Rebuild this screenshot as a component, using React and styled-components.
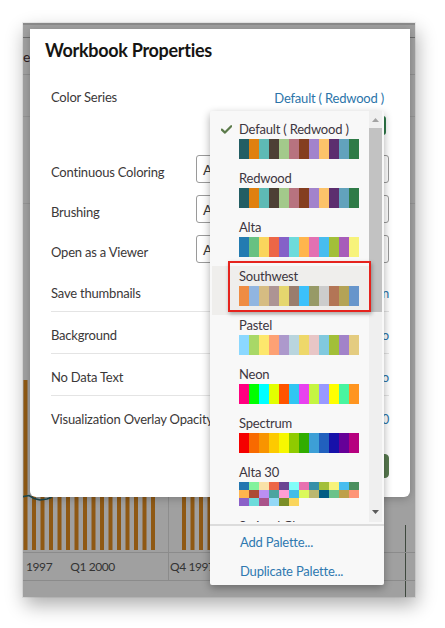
import React from 'react';
import styled, { createGlobalStyle } from 'styled-components';

const GlobalStyle = createGlobalStyle`
  html, body { margin: 0; padding: 0; background: #ffffff; }
  body { font-family: Lato, "Noto Sans", sans-serif; }
`;

const PALETTES = [
  { name: 'Default ( Redwood )', checked: true, rows: [['#235e64','#e0800f','#5ebab5','#4d4035','#a3c98b','#b7737f','#843e1f','#a283cc','#fcc36a','#5c2e6e','#62a2bc','#2e7b47']] },
  { name: 'Redwood', rows: [['#235e64','#e0800f','#5ebab5','#4d4035','#a3c98b','#b7737f','#843e1f','#a283cc','#fcc36a','#5c2e6e','#62a2bc','#2e7b47']] },
  { name: 'Alta', rows: [['#237bb1','#68c182','#fad55c','#ed6647','#8561c8','#6ddbdb','#ffb54d','#e371b2','#47bdef','#a2bf39','#a75dba','#f7f37b']] },
  { name: 'Southwest', active: true, rows: [['#ef8c43','#91b5e0','#d6bc82','#ad9494','#e5d66e','#9a7d6d','#3bc1fb','#979a67','#cccccc','#b37556','#b4a356','#6795cb']] },
  { name: 'Pastel', rows: [['#8bd8ff','#a8d867','#fde76c','#fda174','#ad99cc','#b9d5de','#eed86a','#e8c6c6','#81c9de','#a2bf39','#a283c9','#e4cc80']] },
  { name: 'Neon', rows: [['#ff0080','#00ff00','#00ffff','#e2ff00','#ff5400','#31c6f2','#e842ef','#c5f542','#9999ff','#ffff00','#48f5a0','#ff9520']] },
  { name: 'Spectrum', rows: [['#f50000','#f86a00','#f89400','#fdca00','#f7f700','#8fcb00','#31ad00','#3d9fd6','#2160be','#1611a9','#660098','#b6007f']] },
  { name: 'Alta 30', small: true, rows: [
    ['#2376b0','#82f29d','#f9e2a8','#ed6647','#6a4592','#82fdf9','#e771b0','#3690a8','#a2bf39','#f7f37b','#47bdef','#4b8f5e'],
    ['#ffb54d','#ac4b34','#bb8ff2','#4ca49f','#ff9ed2','#44bde9','#dbf95a','#bbb770','#015c84','#6bc28a','#bea04a','#fe9476'],
    ['#8b61c8','#6ddbdb','#aa538a','#93d8f6','#7a8e26','#fad55c'],
  ] },
  { name: 'Stained Glass', rows: [['#c0392b','#e67e22','#f1c40f','#27ae60','#2980b9','#8e44ad','#16a085','#d35400','#2c3e50','#7f8c8d','#e74c3c','#3498db']] },
];

const GROUP1 = [10, 40, 30, 55, 20, 60, 45, 35, 70, 50, 25, 65, 40, 55, 30, 60];
const GROUP2 = [30, 50, 20, 45, 60, 35, 50, 40, 25, 55, 45];

const textBase = `
  font-size: 13px;
  letter-spacing: -0.2px;
  line-height: 20px;
  white-space: nowrap;
`;

/* ---------- backdrop (dimmed app behind the dialog) ---------- */
const Page = styled.div`
  width: 445px;
  height: 628px;
  padding: 23px 0 0 23px;
  box-sizing: border-box;
  overflow: hidden;
`;

const Frame = styled.div`
  position: relative;
  width: 392px;
  height: 574px;
  background: #a0a0a0;
  box-shadow: 0 0 0 1px rgba(0, 0, 0, 0.06), 2px 8px 18px rgba(0, 0, 0, 0.32);
  display: flex;
  flex-direction: column;
  overflow: hidden;
`;

const TopStrip = styled.div`
  height: 12px;
  border-top: 2px solid #8a8a8a;
  border-bottom: 1px solid #6c6c6c;
`;

const HeadRow = styled.div`
  height: 36px;
  display: flex;
  align-items: center;
  border-bottom: 1px solid #8e8e8e;
`;

const HeadText = styled.span`
  font-size: 14px;
  color: #2e1c1e;
`;

const BandRow = styled.div`
  height: ${(p) => p.$h}px;
  border-bottom: 1px solid #939393;
`;

const Spacer = styled.div`
  flex: 1;
`;

const ChartSvg = styled.svg`
  display: block;
  flex: none;
`;

const edgeLine = `linear-gradient(to right, transparent 382px, #3e493e 382px, #3e493e 383px, transparent 383px)`;

const AxisRow = styled.div`
  height: 27px;
  display: flex;
  border-top: 1px solid #8b8b8b;
  border-bottom: 1px solid #8b8b8b;
  background: ${edgeLine};
`;

const AxisCell = styled.div`
  width: ${(p) => (p.$w ? `${p.$w}px` : 'auto')};
  flex: ${(p) => (p.$w ? 'none' : '1')};
  display: flex;
  align-items: center;
  gap: 18px;
  padding-left: ${(p) => p.$pl}px;
  border-right: ${(p) => (p.$w ? '1px solid #8b8b8b' : 'none')};
  box-sizing: border-box;
`;

const AxisLabel = styled.span`
  font-size: 12px;
  letter-spacing: -0.4px;
  color: #343434;
  white-space: nowrap;
`;

const BottomBand = styled.div`
  height: 16px;
  background: ${edgeLine};
`;

/* ---------- dialog ---------- */
const Dialog = styled.div`
  position: absolute;
  left: 7px;
  top: 6px;
  width: 380px;
  height: 468px;
  background: #ffffff;
  border-radius: 0 0 6px 6px;
  box-shadow: 0 2px 8px rgba(0, 0, 0, 0.22);
  display: flex;
  flex-direction: column;
`;

const Header = styled.div`
  height: 50px;
  box-sizing: border-box;
  padding: 9px 0 0 15px;
`;

const Title = styled.h1`
  margin: 0;
  font-size: 18px;
  letter-spacing: -0.3px;
  line-height: 24px;
  font-weight: 700;
  color: #161513;
`;

const Body = styled.div`
  flex: 1;
  display: flex;
  flex-direction: column;
  padding: 0 21px;
`;

const Row = styled.div`
  height: ${(p) => p.$h}px;
  display: grid;
  grid-template-columns: 145px 1fr;
  align-items: center;
  border-bottom: ${(p) => (p.$divider ? '1px solid #e4e4e4' : 'none')};
  flex: none;
`;

const Label = styled.span`
  ${textBase}
  color: #3b3838;
  padding-top: ${(p) => (p.$low ? 5 : 0)}px;
`;

const Link = styled.a`
  ${textBase}
  justify-self: end;
  color: #2b74a9;
  text-decoration: none;
  padding: ${(p) => (p.$pr ? '2px 5px 0 0' : '5px 0 0 0')};
`;

const ChipRow = styled.div`
  height: 34px;
  display: flex;
  justify-content: flex-end;
  align-items: flex-start;
  flex: none;
`;

const GreenChip = styled.div`
  width: 44px;
  height: 19px;
  margin: 1px 3px 0 0;
  border-radius: 3px;
  background: #2f7b4a;
`;

const Select = styled.div`
  ${textBase}
  height: 28px;
  box-sizing: border-box;
  border: 1px solid #9a9a9a;
  border-radius: 3px;
  display: flex;
  align-items: center;
  justify-content: space-between;
  padding: 2px 8px 0 6px;
  font-size: 14px;
  color: #3b3838;
`;

const Footer = styled.div`
  flex: 1;
  display: flex;
  justify-content: flex-end;
  align-items: flex-end;
  gap: 8px;
  padding: 0 0 19px;
`;

const Button = styled.button`
  height: 24px;
  padding: 0 14px;
  border-radius: 4px;
  border: 1px solid ${(p) => (p.$primary ? '#587a50' : '#a8a8a8')};
  background: ${(p) => (p.$primary ? '#587a50' : '#ffffff')};
  color: ${(p) => (p.$primary ? '#ffffff' : '#3b3838')};
  font-family: Lato, "Noto Sans", sans-serif;
  font-size: 13px;
  font-weight: 700;
`;

/* ---------- palette dropdown ---------- */
const Dropdown = styled.div`
  position: absolute;
  left: 180px;
  top: 82px;
  width: 174px;
  height: 474px;
  background: #f8f8f8;
  border-radius: 2px;
  box-shadow: 0 3px 9px rgba(0, 0, 0, 0.33);
  display: flex;
  flex-direction: column;
  z-index: 2;
`;

const ListArea = styled.div`
  height: 411px;
  display: flex;
  padding-left: 2px;
  flex: none;
`;

const Items = styled.div`
  flex: 1;
  overflow: hidden;
  padding-top: 8px;
`;

const Item = styled.div`
  display: grid;
  grid-template-columns: 27px 120px;
  grid-template-rows: 20px auto;
  padding-bottom: ${(p) => (p.$small ? 10 : 9)}px;
  background: ${(p) => (p.$active ? '#efeeec' : 'transparent')};
`;

const CheckCell = styled.div`
  display: flex;
  align-items: center;
  justify-content: flex-end;
  padding-right: 7px;
`;

const ItemName = styled.span`
  ${textBase}
  color: #3d3640;
`;

const Strip = styled.div`
  grid-column: 2;
  display: grid;
  grid-template-columns: repeat(12, 10px);
  grid-auto-rows: ${(p) => (p.$small ? 8 : 20)}px;
`;

const Swatch = styled.span`
  background: ${(p) => p.$c};
`;

const ScrollTrack = styled.div`
  width: 13px;
  margin-right: 2px;
  background: #efefef;
  display: flex;
  flex-direction: column;
`;

const ArrowBox = styled.div`
  height: 17px;
  display: flex;
  align-items: center;
  justify-content: center;
  margin-bottom: ${(p) => (p.$down ? 2 : 0)}px;
  flex: none;
`;

const Thumb = styled.div`
  height: 184px;
  background: #c2c2c2;
  flex: none;
`;

const TrackRest = styled.div`
  flex: 1;
`;

const Separator = styled.div`
  height: 2px;
  margin-top: 2px;
  background: #dcdcdc;
  flex: none;
`;

const MenuFooter = styled.div`
  padding: 1px 0 0 30px;
  display: flex;
  flex-direction: column;
`;

const MenuAction = styled.a`
  ${textBase}
  height: 29px;
  display: flex;
  align-items: center;
  color: #2f78b0;
  text-decoration: none;
`;

const Annotation = styled.div`
  position: absolute;
  left: 18px;
  top: 150px;
  width: 143px;
  height: 51px;
  box-sizing: border-box;
  border: 2px solid #e5231d;
  box-shadow: 1px 2px 4px rgba(0, 0, 0, 0.3);
  pointer-events: none;
`;

function Check() {
  return (
    <svg width="11" height="9" viewBox="0 0 11 9">
      <path d="M0.8 4.6 L4 7.6 L10.2 1.2" fill="none" stroke="#5c7b4b" strokeWidth="2.2" strokeLinecap="round" strokeLinejoin="round" />
    </svg>
  );
}

function Arrow({ down }) {
  return (
    <svg width="7" height="4" viewBox="0 0 7 4">
      <path d={down ? 'M0 0 L7 0 L3.5 4 Z' : 'M0 4 L7 4 L3.5 0 Z'} fill={down ? '#5a5a5a' : '#a3a3a3'} />
    </svg>
  );
}

function Chart() {
  return (
    <ChartSvg width="392" height="182" viewBox="0 0 392 182">
      {GROUP1.map((t, i) => (
        <rect key={`a${i}`} x={0.5 + i * 8.5} y={t} width="4" height={180 - t} fill="#8f5914" />
      ))}
      {GROUP2.map((t, i) => (
        <rect key={`b${i}`} x={159 + i * 8.5} y={t} width="4" height={180 - t} fill="#8f5914" />
      ))}
      <line x1="145.5" y1="0" x2="145.5" y2="182" stroke="#8d8d8d" strokeWidth="1" />
      <line x1="382.5" y1="155" x2="382.5" y2="182" stroke="#3e493e" strokeWidth="1" />
      <path d="M-2 127 L6 125.5 L11 128.5 L17 130 L24 129 L28 127.5 L32 118 L40 100" fill="none" stroke="#1d4a50" strokeWidth="1.6" />
    </ChartSvg>
  );
}

function PaletteItem({ p }) {
  return (
    <Item $active={p.active} $small={p.small}>
      <CheckCell>{p.checked ? <Check /> : null}</CheckCell>
      <ItemName>{p.name}</ItemName>
      <Strip $small={p.small}>
        {p.rows.flat().map((c, i) => (
          <Swatch key={i} $c={c} />
        ))}
      </Strip>
    </Item>
  );
}

export default function App() {
  return (
    <>
      <GlobalStyle />
      <Page>
        <Frame>
          <TopStrip />
          <HeadRow>
            <HeadText>er</HeadText>
          </HeadRow>
          <BandRow $h={41} />
          <BandRow $h={86} />
          <Spacer />
          <Chart />
          <AxisRow>
            <AxisCell $w={146} $pl={3}>
              <AxisLabel>1997</AxisLabel>
              <AxisLabel>Q1 2000</AxisLabel>
            </AxisCell>
            <AxisCell $pl={1}>
              <AxisLabel>Q4 1997</AxisLabel>
            </AxisCell>
          </AxisRow>
          <BottomBand />

          <Dialog>
            <Header>
              <Title>Workbook Properties</Title>
            </Header>
            <Body>
              <Row $h={36}>
                <Label>Color Series</Label>
                <Link $pr>Default ( Redwood )</Link>
              </Row>
              <ChipRow>
                <GreenChip />
              </ChipRow>
              <Row $h={40}>
                <Label $low>Continuous Coloring</Label>
                <Select>Auto<span>▾</span></Select>
              </Row>
              <Row $h={40}>
                <Label $low>Brushing</Label>
                <Select>Auto<span>▾</span></Select>
              </Row>
              <Row $h={40}>
                <Label $low>Open as a Viewer</Label>
                <Select>Auto<span>▾</span></Select>
              </Row>
              <Row $h={42} $divider>
                <Label $low>Save thumbnails</Label>
                <Link>On</Link>
              </Row>
              <Row $h={41} $divider>
                <Label $low>Background</Label>
                <Link>Auto</Link>
              </Row>
              <Row $h={41} $divider>
                <Label $low>No Data Text</Label>
                <Link>Auto</Link>
              </Row>
              <Row $h={40}>
                <Label $low>Visualization Overlay Opacity</Label>
                <Link>100</Link>
              </Row>
              <Footer>
                <Button>Cancel</Button>
                <Button $primary>Save</Button>
              </Footer>
            </Body>

            <Dropdown>
              <ListArea>
                <Items>
                  {PALETTES.map((p) => (
                    <PaletteItem key={p.name} p={p} />
                  ))}
                </Items>
                <ScrollTrack>
                  <ArrowBox><Arrow /></ArrowBox>
                  <Thumb />
                  <TrackRest />
                  <ArrowBox $down><Arrow down /></ArrowBox>
                </ScrollTrack>
              </ListArea>
              <Separator />
              <MenuFooter>
                <MenuAction>Add Palette...</MenuAction>
                <MenuAction>Duplicate Palette...</MenuAction>
              </MenuFooter>
              <Annotation />
            </Dropdown>
          </Dialog>
        </Frame>
      </Page>
    </>
  );
}
